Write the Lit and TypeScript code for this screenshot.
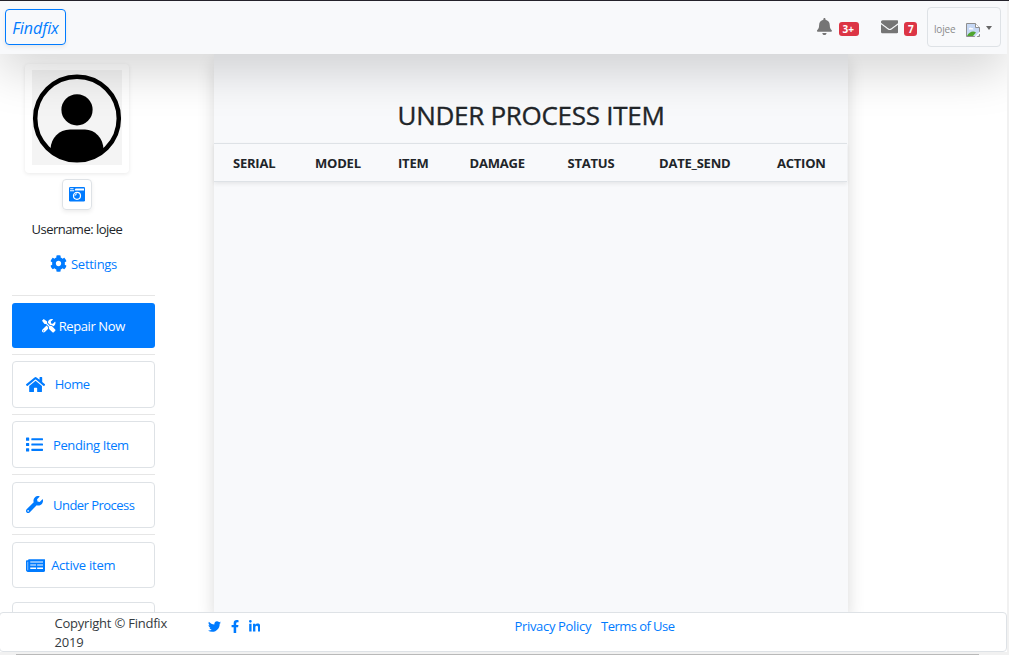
import { LitElement, html, css, svg } from "lit";
import { customElement, property } from "lit/decorators.js";

type Glyph = { box: string; d: string };

const GLYPHS: Record<string, Glyph> = {
  bell: { box: "0 0 448 512", d: "M224 512c35.32 0 63.97-28.65 63.97-64H160.03c0 35.35 28.65 64 63.97 64zm215.39-149.71c-19.32-20.76-55.47-51.99-55.47-154.29 0-77.7-54.48-139.9-127.94-155.16V32c0-17.67-14.32-32-31.98-32s-31.98 14.33-31.98 32v20.84C118.56 68.1 64.08 130.3 64.08 208c0 102.3-36.15 133.53-55.47 154.29-6 6.45-8.66 14.16-8.61 21.71.11 16.4 12.98 32 32.1 32h383.8c19.12 0 32-15.6 32.1-32 .05-7.55-2.61-15.27-8.61-21.71z" },
  envelope: { box: "0 0 512 512", d: "M502.3 190.8c3.9-3.1 9.7-.2 9.7 4.7V400c0 26.5-21.5 48-48 48H48c-26.5 0-48-21.5-48-48V195.6c0-5 5.7-7.8 9.7-4.7 22.4 17.4 52.1 39.5 154.1 113.6 21.1 15.4 56.7 47.8 92.2 47.6 35.7.3 72-32.8 92.3-47.6 102-74.1 131.6-96.3 154-113.7zM256 320c23.2.4 56.6-29.2 73.4-41.4 132.7-96.3 142.8-104.7 173.4-128.7 5.8-4.5 9.2-11.5 9.2-18.9v-19c0-26.5-21.5-48-48-48H48c-26.5 0-48 21.5-48 48v19c0 7.4 3.4 14.3 9.2 18.9 30.6 23.9 40.7 32.4 173.4 128.7 16.8 12.2 50.2 41.8 73.4 41.4z" },
  home: { box: "0 0 576 512", d: "M280.37 148.26L96 300.11V464a16 16 0 0 0 16 16l112.06-.29a16 16 0 0 0 15.92-16V368a16 16 0 0 1 16-16h64a16 16 0 0 1 16 16v95.64a16 16 0 0 0 16 16.05L464 480a16 16 0 0 0 16-16V300L295.67 148.26a12.19 12.19 0 0 0-15.3 0zM571.6 251.47L488 182.56V44.05a12 12 0 0 0-12-12h-56a12 12 0 0 0-12 12v72.61L318.47 43a48 48 0 0 0-61 0L4.34 251.47a12 12 0 0 0-1.6 16.9l25.5 31A12 12 0 0 0 45.15 301l235.22-193.74a12.19 12.19 0 0 1 15.3 0L530.9 301a12 12 0 0 0 16.9-1.6l25.5-31a12 12 0 0 0-1.7-16.93z" },
  list: { box: "0 0 512 512", d: "M80 368H16a16 16 0 0 0-16 16v64a16 16 0 0 0 16 16h64a16 16 0 0 0 16-16v-64a16 16 0 0 0-16-16zm0-320H16A16 16 0 0 0 0 64v64a16 16 0 0 0 16 16h64a16 16 0 0 0 16-16V64a16 16 0 0 0-16-16zm0 160H16a16 16 0 0 0-16 16v64a16 16 0 0 0 16 16h64a16 16 0 0 0 16-16v-64a16 16 0 0 0-16-16zm416 176H176a16 16 0 0 0-16 16v32a16 16 0 0 0 16 16h320a16 16 0 0 0 16-16v-32a16 16 0 0 0-16-16zm0-320H176a16 16 0 0 0-16 16v32a16 16 0 0 0 16 16h320a16 16 0 0 0 16-16V80a16 16 0 0 0-16-16zm0 160H176a16 16 0 0 0-16 16v32a16 16 0 0 0 16 16h320a16 16 0 0 0 16-16v-32a16 16 0 0 0-16-16z" },
  wrench: { box: "0 0 512 512", d: "M507.73 109.1c-2.24-9.03-13.54-12.09-20.12-5.51l-74.36 74.36-67.88-11.31-11.31-67.88 74.36-74.36c6.62-6.62 3.43-17.9-5.66-20.16-47.38-11.74-99.55.91-136.58 37.93-39.64 39.64-50.55 97.1-34.05 147.2L18.74 402.76c-24.99 24.99-24.99 65.51 0 90.5 24.99 24.99 65.51 24.99 90.5 0l213.21-213.21c50.12 16.71 107.47 5.68 147.37-34.22 37.07-37.07 49.7-89.32 37.91-136.73zM64 472c-13.25 0-24-10.75-24-24 0-13.26 10.75-24 24-24s24 10.74 24 24c0 13.25-10.75 24-24 24z" },
  news: { box: "0 0 576 512", d: "M552 64H88c-13.3 0-24 10.7-24 24v8H24c-13.3 0-24 10.7-24 24v272c0 30.9 25.1 56 56 56h472c26.5 0 48-21.5 48-48V88c0-13.3-10.7-24-24-24zM56 400a8 8 0 0 1-8-8V144h16v248a8 8 0 0 1-8 8zM128 136h384v32H128zM128 226h176v32H128zM336 226h176v32H336zM128 318h176v40H128zM336 318h176v40H336z" },
  cog: { box: "0 0 512 512", d: "M487.4 315.7l-42.6-24.6c4.3-23.2 4.3-47 0-70.2l42.6-24.6c4.9-2.8 7.1-8.6 5.5-14-11.1-35.6-30-67.8-54.7-94.6-3.8-4.1-10-5.1-14.8-2.3L380.8 110c-17.9-15.4-38.5-27.3-60.8-35.1V25.8c0-5.6-3.9-10.5-9.4-11.7-36.7-8.2-74.3-7.8-109.2 0-5.5 1.2-9.4 6.1-9.4 11.7V75c-22.2 7.9-42.8 19.8-60.8 35.1L88.7 85.5c-4.9-2.8-11-1.9-14.8 2.3-24.7 26.7-43.6 58.9-54.7 94.6-1.7 5.4.6 11.2 5.5 14L67.3 221c-4.3 23.2-4.3 47 0 70.2l-42.6 24.6c-4.9 2.8-7.1 8.6-5.5 14 11.1 35.6 30 67.8 54.7 94.6 3.8 4.1 10 5.1 14.8 2.3l42.6-24.6c17.9 15.4 38.5 27.3 60.8 35.1v49.2c0 5.6 3.9 10.5 9.4 11.7 36.7 8.2 74.3 7.8 109.2 0 5.5-1.2 9.4-6.1 9.4-11.7v-49.2c22.2-7.9 42.8-19.8 60.8-35.1l42.6 24.6c4.9 2.8 11 1.9 14.8-2.3 24.7-26.7 43.6-58.9 54.7-94.6 1.5-5.5-.7-11.3-5.6-14.1zM256 336c-44.1 0-80-35.9-80-80s35.9-80 80-80 80 35.9 80 80-35.9 80-80 80z" },
  tools: { box: "0 0 512 512", d: "M501.1 395.7L384 278.6c-23.1-23.1-57.6-27.6-85.4-13.9L192 158.1V96L64 0 0 64l96 128h62.1l106.6 106.6c-13.6 27.8-9.2 62.3 13.9 85.4l117.1 117.1c14.6 14.6 38.2 14.6 52.7 0l52.7-52.7c14.5-14.6 14.5-38.2 0-52.7zM331.7 225c28.3 0 54.9 11 74.9 31l19.4 19.4c15.8-6.9 30.8-16.5 43.8-29.5 37.1-37.1 49.7-89.3 37.9-136.7-2.2-9-13.5-12.1-20.1-5.5l-74.4 74.4-67.9-11.3L334 98.9l74.4-74.4c6.6-6.6 3.4-17.9-5.7-20.2-47.4-11.7-99.6.9-136.6 37.9-28.5 28.5-41.9 66.1-41.2 103.6l82.1 82.1c8.1-1.9 16.5-2.9 24.7-2.9zm-103.9 82l-56.7-56.7L18.7 402.8c-25 25-25 65.5 0 90.5s65.5 25 90.5 0l123.6-123.6c-7.6-19.9-9.9-41.6-5-62.7zM64 472c-13.2 0-24-10.8-24-24 0-13.3 10.7-24 24-24s24 10.7 24 24c0 13.2-10.7 24-24 24z" },
  twitter: { box: "0 0 512 512", d: "M459.37 151.716c.325 4.548.325 9.097.325 13.645 0 138.72-105.583 298.558-298.558 298.558-59.452 0-114.68-17.219-161.137-47.106 8.447.974 16.568 1.299 25.34 1.299 49.055 0 94.213-16.568 130.274-44.832-46.132-.975-84.792-31.188-98.112-72.772 6.498.974 12.995 1.624 19.818 1.624 9.421 0 18.843-1.3 27.614-3.573-48.081-9.747-84.143-51.98-84.143-102.985v-1.299c13.969 7.797 30.214 12.67 47.431 13.319-28.264-18.843-46.781-51.005-46.781-87.391 0-19.492 5.197-37.36 14.294-52.954 51.655 63.675 129.3 105.258 216.365 109.807-1.624-7.797-2.599-15.918-2.599-24.04 0-57.828 46.782-104.934 104.934-104.934 30.213 0 57.502 12.67 76.67 33.137 23.715-4.548 46.456-13.32 66.599-25.34-7.798 24.366-24.366 44.833-46.132 57.827 21.117-2.273 41.584-8.122 60.426-16.243-14.292 20.791-32.161 39.308-52.628 54.253z" },
  facebook: { box: "0 0 320 512", d: "M279.14 288l14.22-92.66h-88.91v-60.13c0-25.35 12.42-50.06 52.24-50.06h40.42V6.26S260.43 0 225.36 0c-73.22 0-121.08 44.38-121.08 124.72v70.62H22.89V288h81.39v224h100.17V288z" },
  linkedin: { box: "0 0 448 512", d: "M100.28 448H7.4V148.9h92.88zM53.79 108.1C24.09 108.1 0 83.5 0 53.8a53.79 53.79 0 0 1 107.58 0c0 29.7-24.1 54.3-53.79 54.3zM447.9 448h-92.68V302.4c0-34.7-.7-79.2-48.29-79.2-48.29 0-55.69 37.7-55.69 76.7V448h-92.78V148.9h89.08v40.8h1.3c12.4-23.5 42.69-48.3 87.88-48.3 94 0 111.28 61.9 111.28 142.3V448z" },
};

@customElement("fa-glyph")
export class FaGlyph extends LitElement {
  @property() name = "";
  static styles = css`
    :host { display: block; flex: none; }
    .glyph { display: block; height: 100%; width: auto; fill: currentColor; fill-rule: evenodd; }
  `;
  render() {
    const g = GLYPHS[this.name];
    return html`<svg class="glyph" viewBox=${g.box}>${svg`<path d=${g.d}></path>`}</svg>`;
  }
}

const NAV = [
  { icon: "home", label: "Home", cls: "home" },
  { icon: "list", label: "Pending Item", cls: "pending" },
  { icon: "wrench", label: "Under Process", cls: "process" },
  { icon: "news", label: "Active item", cls: "active" },
];

const COLUMNS = ["SERIAL", "MODEL", "ITEM", "DAMAGE", "STATUS", "DATE_SEND", "ACTION"];

@customElement("app-root")
export class AppRoot extends LitElement {
  static styles = css`
    :host {
      display: grid;
      grid-template-columns: 1fr 2px;
      grid-template-rows: 1px 1fr 3px;
      width: 1009px;
      height: 655px;
      overflow: hidden;
      box-sizing: border-box;
      background: #fff;
      color: #212529;
      font-family: "Open Sans", "Noto Sans", sans-serif;
      font-size: 13px;
      line-height: 19.5px;
    }
    * { box-sizing: border-box; }
    .topline { grid-column: 1 / 3; background: #24222b; }
    .vbar { background: #f1f1f1; }
    .hbar { grid-column: 1 / 3; background: #f1f1f1; padding: 2px 30px 0 16px; }
    .thumb { height: 1px; background: #b9b9b9; }
    .view { display: flex; flex-direction: column; overflow: hidden; min-height: 0; }

    .navbar {
      position: relative;
      z-index: 2;
      flex: none;
      height: 53px;
      display: flex;
      align-items: flex-start;
      background: #f8f9fb;
      box-shadow: 0 16px 48px rgba(0, 0, 0, 0.175);
      padding: 6px 6px 0 5px;
    }
    .brand {
      margin-top: 2px;
      width: 61px;
      height: 36px;
      border: 1px solid #007bff;
      border-radius: 4px;
      box-shadow: 0 2px 4px rgba(0, 0, 0, 0.075);
      color: #007bff;
      font-style: italic;
      font-size: 16px;
      line-height: 36px;
      text-align: center;
      letter-spacing: -0.05px;
    }
    .alerts { margin-left: auto; display: flex; color: #757575; }
    .bell { height: 17px; margin-top: 11px; }
    .mail { height: 17.5px; margin: 11px 0 0 22px; }
    .badge {
      margin: 15px 0 0 7px;
      height: 14px;
      padding: 0 4px;
      border-radius: 3px;
      background: #dc3545;
      color: #fff;
      font-size: 10px;
      font-weight: 700;
      line-height: 14px;
    }
    .badge.more { width: 20px; }
    .badge.count { width: 13px; margin-left: 6px; }
    .account {
      margin-left: 10px;
      width: 74px;
      height: 40px;
      border: 1px solid #dee2e6;
      border-radius: 4px;
      display: flex;
      padding: 0 0 0 6px;
      color: #8a8a8a;
      font-size: 10px;
      letter-spacing: -0.15px;
    }
    .who { width: 32px; line-height: 43px; }
    .broken { width: 14px; height: 14px; margin-top: 15px; }
    .caret {
      width: 0; height: 0;
      margin: 18px 0 0 6px;
      border: 3.5px solid transparent;
      border-top: 4px solid #666;
      border-bottom: 0;
    }

    .body { flex: 1; min-height: 0; overflow: hidden; display: flex; align-items: stretch; }
    .side { flex: none; width: 214px; padding: 10px 0 0 12px; }
    .col { width: 143px; display: flex; flex-direction: column; }
    .avatar {
      margin-left: 12.5px;
      width: 104px;
      height: 109px;
      padding: 6px 7px;
      border-radius: 4px;
      background: #fff;
      box-shadow: 0 1px 4px rgba(0, 0, 0, 0.09);
    }
    .pic { display: block; width: 90px; height: 95px; }
    .camera {
      margin: 6px 0 0 50px;
      width: 30px;
      height: 31px;
      border: 1px solid #dee2e6;
      border-radius: 4px;
      box-shadow: 0 2px 4px rgba(0, 0, 0, 0.075);
      padding: 7px 6px;
    }
    .cam { display: block; width: 16px; height: 15px; }
    .user { margin-top: 9.5px; padding-left: 19.5px; letter-spacing: -0.52px; white-space: nowrap; }
    .settings { margin-top: 15px; padding-left: 38px; display: flex; align-items: center; gap: 4px; color: #007bff; letter-spacing: -0.27px; }
    .settings span { padding-top: 1px; margin-bottom: -1px; }
    .gear { height: 17px; }
    .rule { height: 1px; background: #e6e6e6; }
    .first { margin-top: 21.5px; }
    .repair {
      margin: 7px 0 5.5px;
      height: 45px;
      border-radius: 3px;
      background: #007bff;
      color: #fff;
      display: flex;
      align-items: center;
      justify-content: center;
      gap: 3px;
      letter-spacing: -0.4px;
      padding-top: 1px;
    }
    .repair span { padding-top: 2px; }
    .tools { height: 13.5px; }
    .link {
      margin: 6.5px 0;
      height: 46.33px;
      border: 1px solid #dee2e6;
      border-radius: 4px;
      display: flex;
      align-items: center;
      padding: 0 0 0 13px;
      color: #007bff;
      white-space: nowrap;
    }
    .ico { height: 17px; }
    .home { gap: 9.5px; letter-spacing: -0.45px; height: 47px; margin-bottom: 5.83px; }
    .pending, .process { gap: 10px; }
    .pending { letter-spacing: -0.38px; }
    .process { letter-spacing: -0.53px; }
    .pending span, .process span { padding-top: 2px; }
    .active { gap: 6px; letter-spacing: -0.24px; }
    .active span { padding-top: 1.4px; }
    .last { margin-top: 7px; }

    .panel {
      flex: none;
      width: 634px;
      background: #f8f9fb;
      box-shadow: 0 8px 16px rgba(0, 0, 0, 0.15);
    }
    .title {
      margin: 46px 0 0;
      height: 43px;
      text-align: center;
      font-size: 26px;
      font-weight: 500;
      line-height: 31px;
      letter-spacing: -0.28px;
      -webkit-text-stroke: 0.35px #212529;
    }
    .head {
      width: 633px;
      height: 39px;
      border-top: 1px solid #dee2e6;
      border-bottom: 1px solid #dee2e6;
      box-shadow: 0 2px 4px rgba(0, 0, 0, 0.075);
      display: grid;
      grid-template-columns: 82px 83px 71.5px 98px 91.5px 118px 1fr;
      padding-left: 19px;
      line-height: 38px;
      font-weight: 700;
      letter-spacing: -0.22px;
    }

    .footer {
      position: relative;
      z-index: 3;
      flex: none;
      height: 40px;
      margin-left: -1px;
      background: #fff;
      border: 1px solid #dee2e6;
      border-radius: 4px;
      display: flex;
      padding-left: 54.5px;
      color: #343a40;
    }
    .copy { width: 153px; line-height: 19px; padding-top: 1px; letter-spacing: -0.22px; }
    .social { width: 307px; display: flex; color: #007bff; padding-top: 7px; }
    .soc { height: 13px; }
    .fb { margin-left: 10px; }
    .in { margin-left: 10px; }
    .legal { display: flex; gap: 10px; color: #007bff; padding-top: 4px; white-space: nowrap; }
    .privacy { letter-spacing: -0.33px; }
    .terms { letter-spacing: -0.55px; }
  `;

  render() {
    return html`
      <div class="topline"></div>
      <div class="view">
        <div class="navbar">
          <div class="brand">Findfix</div>
          <div class="alerts">
            <fa-glyph class="bell" name="bell"></fa-glyph><span class="badge more">3+</span>
            <fa-glyph class="mail" name="envelope"></fa-glyph><span class="badge count">7</span>
          </div>
          <div class="account">
            <span class="who">lojee</span>
            <svg class="broken" viewBox="0 0 14 14">
              <path d="M.5 .5H9.5L13.5 4.500V13.500H.5Z" fill="#c6d8f5" stroke="#8f8f8f"></path>
              <path d="M9.500 .5V4.500H13.500" fill="#fff" stroke="#8f8f8f"></path>
              <path d="M3 6.500a1.500 1.500 0 0 1 2.500-1.500 1.500 1.500 0 0 1 2 1.500z" fill="#fff"></path>
              <path d="M1 13C3 9 7 7.500 10 9.500L7 13Z" fill="#4fa52f"></path>
              <path d="M8.500 14L14 8.500V10.500L10.500 14Z" fill="#fff"></path>
            </svg>
            <span class="caret"></span>
          </div>
        </div>

        <div class="body">
          <div class="side">
            <div class="col">
              <div class="avatar">
                <svg class="pic" viewBox="0 0 90 95">
                  <rect width="90" height="95" fill="#f4f4f4"></rect>
                  <clipPath id="disc"><circle cx="45" cy="48.500" r="43"></circle></clipPath>
                  <circle cx="45" cy="48.500" r="41.800" fill="#f4f4f4" stroke="#000" stroke-width="4.500"></circle>
                  <circle cx="45" cy="39.800" r="15.600"></circle>
                  <path clip-path="url(#disc)" d="M18.500 79C19 68 27 59.500 38 59.500H53C63 59.500 71 68 71.500 79V95H18.500Z"></path>
                </svg>
              </div>
              <div class="camera">
                <svg class="cam" viewBox="0 0 16 15">
                  <path fill="#007bff" d="M1.200 0H14.800Q16 0 16 1.200V13.300Q16 14.500 14.800 14.500H1.200Q0 14.500 0 13.300V1.200Q0 0 1.200 0Z"></path>
                  <path fill="#fff" d="M1.200 1.300H4.500V2.200H1.200ZM6.500 1.500H15V3.500H5.500ZM1 3.300H5V4.200H1Z"></path>
                  <circle cx="8" cy="8.800" r="3.500" fill="#007bff" stroke="#fff" stroke-width="1.200"></circle>
                  <path d="M6 8.800A2 2 0 0 1 8 6.800" fill="none" stroke="#fff"></path>
                </svg>
              </div>
              <div class="user">Username: lojee</div>
              <div class="settings"><fa-glyph class="gear" name="cog"></fa-glyph><span>Settings</span></div>
              <div class="rule first"></div>
              <div class="repair"><fa-glyph class="tools" name="tools"></fa-glyph><span>Repair Now</span></div>
              ${NAV.map((n) => html`
                <div class="rule"></div>
                <div class="link ${n.cls}"><fa-glyph class="ico" name=${n.icon}></fa-glyph><span>${n.label}</span></div>
              `)}
              <div class="link last"></div>
            </div>
          </div>
          <div class="panel">
            <div class="title">UNDER PROCESS ITEM</div>
            <div class="head">${COLUMNS.map((c) => html`<span>${c}</span>`)}</div>
          </div>
        </div>

        <div class="footer">
          <div class="copy">Copyright © Findfix<br />2019</div>
          <div class="social">
            <fa-glyph class="soc" name="twitter"></fa-glyph>
            <fa-glyph class="soc fb" name="facebook"></fa-glyph>
            <fa-glyph class="soc in" name="linkedin"></fa-glyph>
          </div>
          <div class="legal"><span class="privacy">Privacy Policy</span><span class="terms">Terms of Use</span></div>
        </div>
      </div>
      <div class="vbar"></div>
      <div class="hbar"><div class="thumb"></div></div>
    `;
  }
}
